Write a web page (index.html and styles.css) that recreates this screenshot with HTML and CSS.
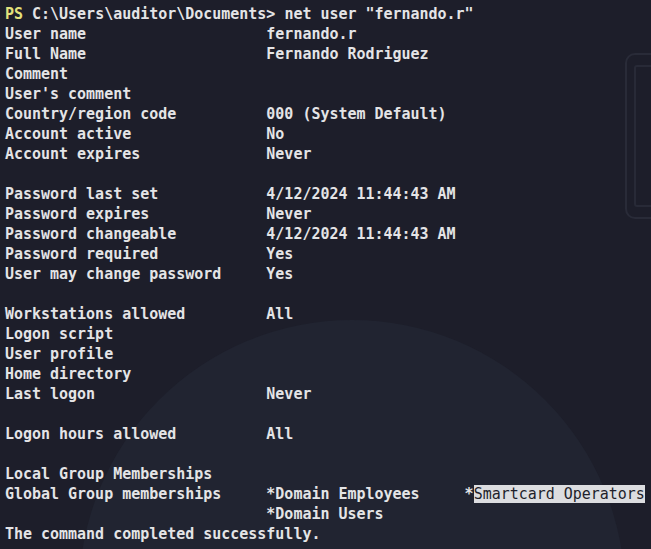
FILE: index.html
```html
<!DOCTYPE html>
<html>
<head>
<meta charset="utf-8">
<link rel="stylesheet" href="styles.css">
</head>
<body>
<div class="term">
  <div class="glow"></div>
  <div class="frame"><div class="frame-inner"></div></div>
  <div class="lines">
<div class="line"><span class="ps">PS</span> C:\Users\auditor\Documents&gt; net user "fernando.r"</div>
<div class="line">User name                    fernando.r</div>
<div class="line">Full Name                    Fernando Rodriguez</div>
<div class="line">Comment</div>
<div class="line">User's comment</div>
<div class="line">Country/region code          000 (System Default)</div>
<div class="line">Account active               No</div>
<div class="line">Account expires              Never</div>
<div class="line"> </div>
<div class="line">Password last set            4/12/2024 11:44:43 AM</div>
<div class="line">Password expires             Never</div>
<div class="line">Password changeable          4/12/2024 11:44:43 AM</div>
<div class="line">Password required            Yes</div>
<div class="line">User may change password     Yes</div>
<div class="line"> </div>
<div class="line">Workstations allowed         All</div>
<div class="line">Logon script</div>
<div class="line">User profile</div>
<div class="line">Home directory</div>
<div class="line">Last logon                   Never</div>
<div class="line"> </div>
<div class="line">Logon hours allowed          All</div>
<div class="line"> </div>
<div class="line">Local Group Memberships</div>
<div class="line">Global Group memberships     *Domain Employees     *<span class="sel">Smartcard Operators</span></div>
<div class="line">                             *Domain Users</div>
<div class="line">The command completed successfully.</div>
  </div>
</div>
</body>
</html>
```
FILE: styles.css
```css
html, body {
  margin: 0;
  padding: 0;
  background: #1d1e2a;
}
.term {
  position: relative;
  width: 651px;
  height: 549px;
  overflow: hidden;
  background: #1d1e2a;
}
.glow {
  position: absolute;
  left: 79px;
  top: 320px;
  width: 546px;
  height: 546px;
  border-radius: 50%;
  background: #212431;
}
.frame {
  position: absolute;
  left: 625px;
  top: 53px;
  width: 60px;
  height: 166px;
  border: 2px solid #292b38;
  border-radius: 10px;
  box-sizing: border-box;
  padding: 10px 0 0 7px;
}
.frame-inner {
  width: 60px;
  height: 142px;
  border: 2px solid #282a37;
  border-radius: 3px;
  box-sizing: border-box;
}
.lines {
  position: relative;
  padding: 4px 0 0 5px;
  font-family: "DejaVu Sans Mono", monospace;
  font-size: 14.97px;
  font-weight: bold;
  line-height: 20px;
  color: #e4e4e6;
}
.line {
  white-space: pre;
  height: 20px;
}
.ps {
  color: #e3e27c;
}
.sel {
  background: #dcdde0;
  color: #1e1f2b;
  font-weight: normal;
}
```
